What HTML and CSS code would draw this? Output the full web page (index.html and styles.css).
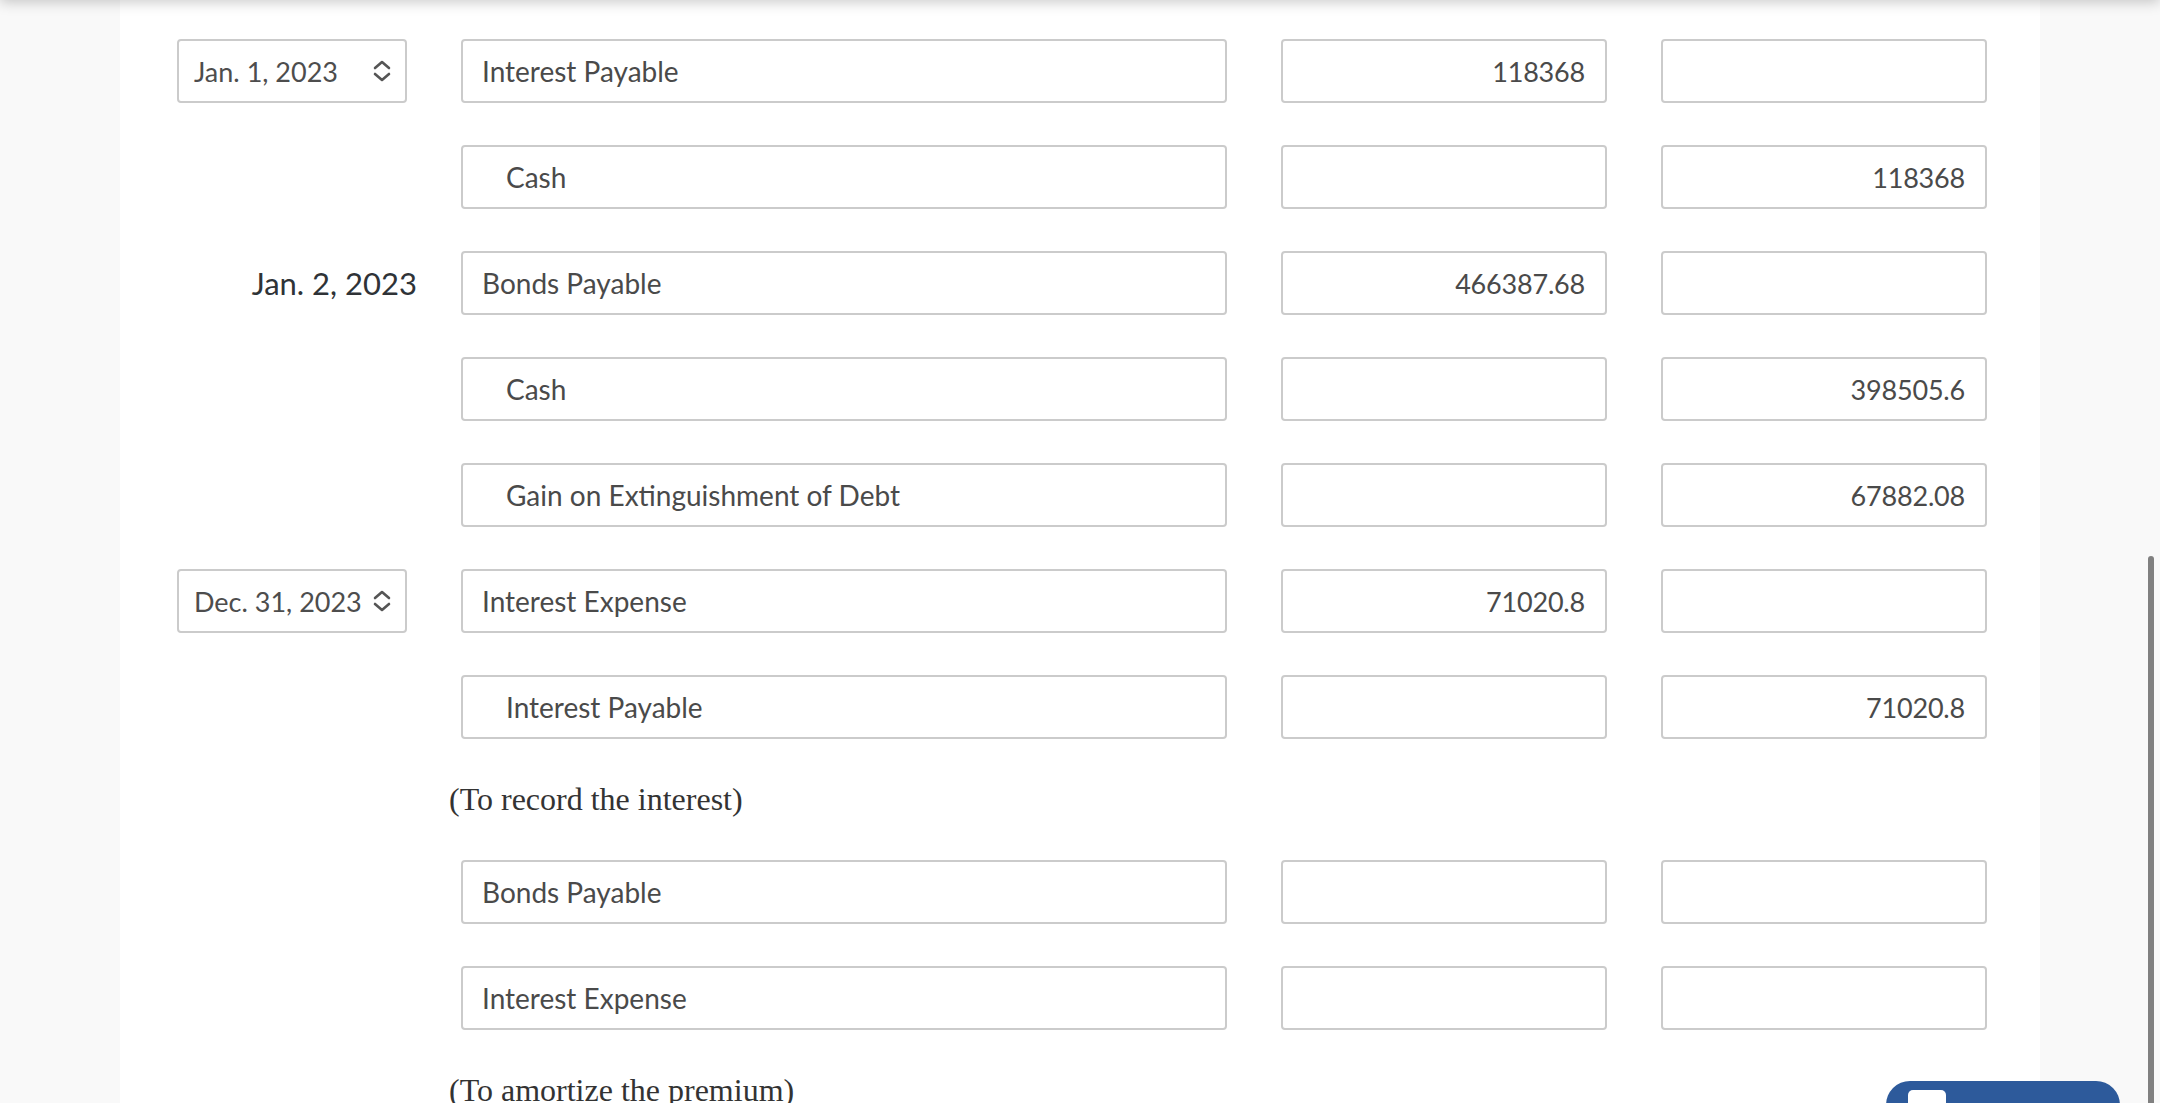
FILE: index.html
```html
<!DOCTYPE html>
<html lang="en">
<head>
<meta charset="utf-8">
<title>Journal entries</title>
<link rel="stylesheet" href="styles.css">
</head>
<body>
<div class="topshade"></div>
<main class="panel">
  <div class="row">
    <div class="date-cell"><div class="select"><span>Jan. 1, 2023</span><svg class="chev" viewBox="0 0 18 22" width="18" height="22"><path d="M2 8 L9 2 L16 8 M2 14 L9 20 L16 14" fill="none" stroke="#555" stroke-width="2.6" stroke-linecap="round" stroke-linejoin="round"/></svg></div></div>
    <div class="box acct">Interest Payable</div>
    <div class="box num">118368</div>
    <div class="box num"></div>
  </div>
  <div class="row">
    <div class="date-cell"></div>
    <div class="box acct indent">Cash</div>
    <div class="box num"></div>
    <div class="box num">118368</div>
  </div>
  <div class="row">
    <div class="date-cell"><span class="date-label">Jan. 2, 2023</span></div>
    <div class="box acct">Bonds Payable</div>
    <div class="box num">466387.68</div>
    <div class="box num"></div>
  </div>
  <div class="row">
    <div class="date-cell"></div>
    <div class="box acct indent">Cash</div>
    <div class="box num"></div>
    <div class="box num">398505.6</div>
  </div>
  <div class="row">
    <div class="date-cell"></div>
    <div class="box acct indent">Gain on Extinguishment of Debt</div>
    <div class="box num"></div>
    <div class="box num">67882.08</div>
  </div>
  <div class="row">
    <div class="date-cell"><div class="select"><span>Dec. 31, 2023</span><svg class="chev" viewBox="0 0 18 22" width="18" height="22"><path d="M2 8 L9 2 L16 8 M2 14 L9 20 L16 14" fill="none" stroke="#555" stroke-width="2.6" stroke-linecap="round" stroke-linejoin="round"/></svg></div></div>
    <div class="box acct">Interest Expense</div>
    <div class="box num">71020.8</div>
    <div class="box num"></div>
  </div>
  <div class="row">
    <div class="date-cell"></div>
    <div class="box acct indent">Interest Payable</div>
    <div class="box num"></div>
    <div class="box num">71020.8</div>
  </div>
  <p class="note">(To record the interest)</p>
  <div class="row">
    <div class="date-cell"></div>
    <div class="box acct">Bonds Payable</div>
    <div class="box num"></div>
    <div class="box num"></div>
  </div>
  <div class="row">
    <div class="date-cell"></div>
    <div class="box acct">Interest Expense</div>
    <div class="box num"></div>
    <div class="box num"></div>
  </div>
  <p class="note">(To amortize the premium)</p>
</main>
<div class="scrollthumb"></div>
<button class="float-btn" type="button"><span class="float-icon"></span></button>
</body>
</html>
```

FILE: styles.css
```css
html, body {
  margin: 0;
  padding: 0;
}
body {
  background: #f9f9f9;
  font-family: Lato, "Open Sans", sans-serif;
  color: #4a4a4a;
  overflow: hidden;
  height: 1103px;
}
.topshade {
  position: fixed;
  left: 0;
  right: 0;
  top: -20px;
  height: 20px;
  background: #fff;
  box-shadow: 0 2px 14px rgba(0, 0, 0, 0.22);
  z-index: 5;
}
.panel {
  margin-left: 120px;
  width: 1920px;
  min-height: 1200px;
  box-sizing: border-box;
  background: #fff;
  padding: 39px 53px 0 57px;
  display: flex;
  flex-direction: column;
  gap: 42px;
}
.row {
  display: flex;
  height: 64px;
}
.date-cell {
  width: 240px;
  margin-right: 44px;
  display: flex;
  align-items: center;
  justify-content: flex-end;
}
.select {
  width: 230px;
  height: 64px;
  margin-right: 10px;
  box-sizing: border-box;
  border: 2px solid #cbcbcb;
  border-radius: 4px;
  display: flex;
  align-items: center;
  justify-content: space-between;
  padding: 0 14px 0 15px;
  font-size: 27px;
  color: #4d4d4d;
}
.chev {
  display: block;
  flex: none;
}
.date-label {
  font-size: 31px;
  color: #2f3337;
}
.box {
  box-sizing: border-box;
  height: 64px;
  border: 2px solid #cbcbcb;
  border-radius: 4px;
  display: flex;
  align-items: center;
  font-size: 28px;
  color: #4a4a4a;
}
.acct {
  width: 766px;
  margin-right: 54px;
  padding-left: 19px;
}
.acct.indent {
  padding-left: 43px;
}
.num {
  width: 326px;
  justify-content: flex-end;
  padding-right: 20px;
  font-size: 27px;
  letter-spacing: -0.2px;
}
.num + .num {
  margin-left: 54px;
}
.note {
  margin: 0 0 0 272px;
  height: 37px;
  line-height: 37px;
  font-family: "Liberation Serif", "Times New Roman", serif;
  font-size: 32px;
  color: #333;
}
.scrollthumb {
  position: fixed;
  left: 2148px;
  top: 556px;
  bottom: 0;
  width: 6px;
  border-radius: 3px 3px 0 0;
  background: #808080;
}
.float-btn {
  position: fixed;
  left: 1886px;
  top: 1081px;
  width: 234px;
  height: 60px;
  border: none;
  border-radius: 24px 24px 0 0;
  background: #2d5a9b;
  padding: 0;
}
.float-icon {
  position: absolute;
  left: 22px;
  top: 9px;
  width: 38px;
  height: 30px;
  border-radius: 5px;
  background: #fff;
}
```
